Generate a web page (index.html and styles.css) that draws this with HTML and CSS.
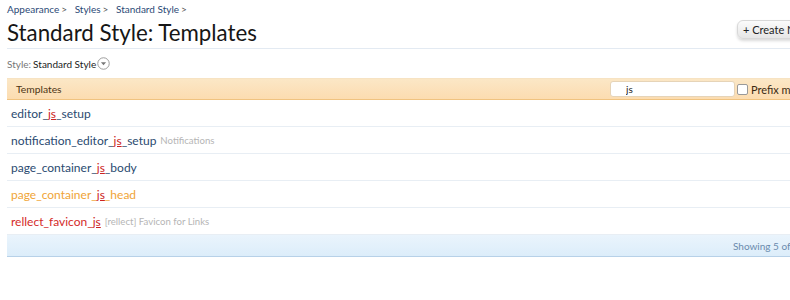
FILE: index.html
```html
<!DOCTYPE html>
<html>
<head>
<meta charset="utf-8">
<link rel="stylesheet" href="styles.css">
</head>
<body>
<div class="page">
  <nav class="crumbs">
    <a>Appearance</a><span class="sep">&gt;</span>
    <a>Styles</a><span class="sep">&gt;</span>
    <a>Standard Style</a><span class="sep">&gt;</span>
  </nav>
  <div class="titlebar">
    <h1>Standard Style: Templates</h1>
    <button class="create">+ Create New Template</button>
  </div>
  <div class="stylechooser">
    <span class="label">Style:</span> <span class="value">Standard Style</span>
    <svg class="chev" width="13" height="13" viewBox="0 0 12 12"><circle cx="6" cy="6" r="5.3" fill="#fff" stroke="#9a9a9a" stroke-width="0.9"/><path d="M3.6 4.9 L8.4 4.9 L6 7.6 Z" fill="#777"/></svg>
  </div>
  <div class="list">
    <div class="listhead">
      <span class="headtitle">Templates</span>
      <div class="filter">
        <input class="search" type="text" value="js">
        <label class="prefix"><span class="box"></span>Prefix match</label>
      </div>
    </div>
    <div class="row"><a class="name blue">editor_<u>js</u>_setup</a></div>
    <div class="row"><a class="name blue">notification_editor_<u>js</u>_setup</a><span class="muted">Notifications</span></div>
    <div class="row"><a class="name blue">page_container_<u>js</u>_body</a></div>
    <div class="row"><a class="name orange">page_container_<u>js</u>_head</a></div>
    <div class="row"><a class="name red">rellect_favicon_<u>js</u></a><span class="muted">[rellect] Favicon for Links</span></div>
    <div class="listfoot">Showing 5 of 5 items</div>
  </div>
</div>
</body>
</html>
```

FILE: styles.css
```css
html, body { margin: 0; padding: 0; overflow: hidden; background: #fff; }
body { font-family: Lato, "Open Sans", sans-serif; color: #141414; }
.page { width: 860px; padding: 2px 0 0 7px; }
.crumbs { font-size: 10px; height: 14px; line-height: 14px; }
.crumbs a { color: #2b4a76; }
.crumbs .sep { color: #555; margin: 0 5px 0 2px; }
.titlebar { display: flex; align-items: center; justify-content: space-between; height: 32px; border-bottom: 1px solid #e3eaf2; }
h1 { margin: 0; font-weight: normal; font-size: 22.3px; color: #161616; }
.create { width: 130px; height: 19px; margin-bottom: 5px; border: 1px solid #d8d8d8; border-radius: 6px; background: linear-gradient(#fbfbfb, #e6e6e6); box-shadow: 0 2px 3px rgba(0,0,0,0.15); font-family: inherit; font-size: 11px; color: #222; text-align: left; padding: 0 5px; }
.stylechooser { height: 29px; display: flex; align-items: center; font-size: 10px; }
.stylechooser .label { color: #777; margin-right: 2px; }
.stylechooser .value { color: #222; }
.chev { margin-left: 1px; }
.listhead { height: 20px; display: flex; align-items: center; justify-content: space-between; background: linear-gradient(#fbe7c6, #fcdcb0); border-top: 1px solid #f7e3c3; border-bottom: 1px solid #f0c380; padding-left: 9px; }
.headtitle { font-size: 10.3px; color: #4d3515; }
.filter { display: flex; align-items: center; width: 257px; }
.search { width: 102px; height: 14px; border: 1px solid #e6d4b8; border-radius: 3px; padding: 0 6px 0 15px; font-family: inherit; font-size: 10px; color: #222; background: #fff; outline: none; margin: 0; }
.prefix { display: flex; align-items: center; font-size: 11px; color: #3b2a12; white-space: nowrap; }
.box { width: 9px; height: 9px; border: 1px solid #999; border-radius: 2px; background: #fff; margin: 0 3px 0 2px; }
.row { height: 26px; display: flex; align-items: center; border-bottom: 1px solid #e8eef4; padding-left: 4px; font-size: 12px; }
.name { text-decoration: none; }
.name u { color: #cc2222; text-decoration: underline; text-underline-offset: 1px; }
.blue { color: #2a4a70; }
.orange { color: #f0a436; }
.red { color: #d42a2a; }
.muted { color: #b5b5b5; font-size: 9.6px; margin-left: 4px; }
.listfoot { height: 21px; display: flex; align-items: center; background: linear-gradient(#eaf4fc, #dcedfa); border-bottom: 1px solid #b7d1e8; font-size: 10px; color: #6a8bad; padding-left: 726px; }
```
